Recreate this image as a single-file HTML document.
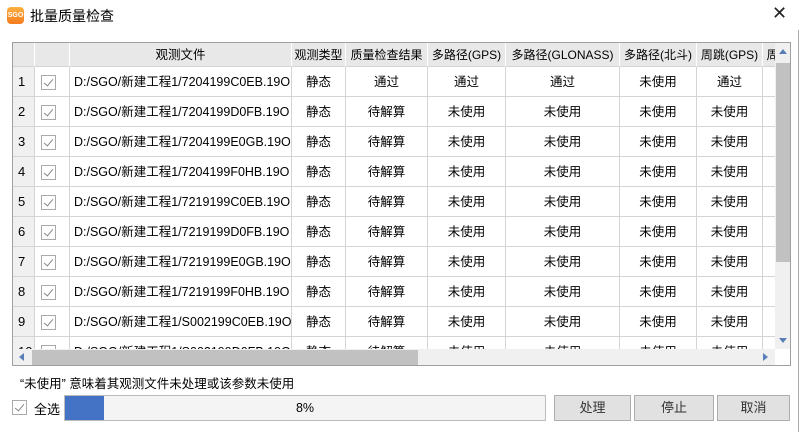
<!DOCTYPE html><html><head><meta charset="utf-8"><style>
*{margin:0;padding:0;box-sizing:border-box}
body{width:802px;height:432px;background:#fff;font-family:"Liberation Sans","Noto Sans CJK SC",sans-serif;font-size:12.5px;color:#000;position:relative;overflow:hidden}
.a{position:absolute}
.c{position:absolute;text-align:center;line-height:30px;border-right:1px solid #d4d4d4;border-bottom:1px solid #d4d4d4;height:30px;white-space:nowrap;overflow:hidden}
.h{background:#e8e8e8;line-height:24px;height:24px;border-right:1px solid #fff;border-bottom:1px solid #d4d4d4}
.n{background:#f0f0f0;text-align:left;padding-left:5px;font-size:13px}
.cb{position:absolute;left:41px;width:15px;height:15px;border:1px solid #aaa;background:#fff}
.cb:after{content:"";position:absolute;left:4px;top:1px;width:4px;height:8px;border-right:1px solid #888;border-bottom:1px solid #888;transform:rotate(40deg)}
.btn{position:absolute;top:395px;height:26px;background:#e1e1e1;border:1px solid #adadad;text-align:center;line-height:24px;color:#333;font-size:13px}
</style></head><body>
<div class="a" style="left:7px;top:7px;width:17px;height:17px;border-radius:4px;background:linear-gradient(#fcb040,#f57c1f);color:#fff;font-size:7px;font-weight:bold;line-height:17px;text-align:center">SGO</div>
<div class="a" style="left:30px;top:6px;font-size:14px">批量质量检查</div>
<div class="a" style="left:772px;top:3px;font-size:18px;color:#222">✕</div>
<div class="a" style="left:798px;top:30px;width:1px;height:402px;background:#aaa"></div>
<div class="a" style="left:12px;top:42px;width:779px;height:324px;border:1px solid #a0a0a0;overflow:hidden" id="t"></div>
<script>
var t=document.getElementById('t');
var cols=[[0,22],[22,35],[57,222],[279,54],[333,82],[415,78],[493,114],[607,77],[684,66],[750,20]];
var hd=['','','观测文件','观测类型','质量检查结果','多路径(GPS)','多路径(GLONASS)','多路径(北斗)','周跳(GPS)','周'];
var h='';
cols.forEach(function(c,i){h+='<div class="c h" style="left:'+c[0]+'px;top:0;width:'+c[1]+'px;'+(i>=3?'font-size:12px;':'')+'">'+hd[i]+'</div>'});
var f=['7204199C0EB','7204199D0FB','7204199E0GB','7204199F0HB','7219199C0EB','7219199D0FB','7219199E0GB','7219199F0HB','S002199C0EB','S002199D0FB'];
for(var r=0;r<10;r++){var y=24+r*30;
var first=r==0;
var v=[''+(r+1),'','D:/SGO/新建工程1/'+f[r]+'.19O','静态',first?'通过':'待解算',first?'通过':'未使用',first?'通过':'未使用','未使用',first?'通过':'未使用',''];
cols.forEach(function(c,i){var cl='c'+(i==0?' n':'');var st='left:'+c[0]+'px;top:'+y+'px;width:'+c[1]+'px;'+(i==2?'text-align:left;padding-left:4px;':'');h+='<div class="'+cl+'" style="'+st+'">'+v[i]+'</div>'});
h+='<div class="cb" style="left:28px;top:'+(y+8)+'px"></div>';}
h+='<div class="a" style="left:762px;top:0;width:16px;height:306px;background:#f0f0f0"></div>';
h+='<div class="a" style="left:763px;top:20px;width:14px;height:199px;background:#c1c1c1"></div>';
h+='<div class="a" style="left:766px;top:6px;width:0;height:0;border-left:4px solid transparent;border-right:4px solid transparent;border-bottom:5px solid #5a7fb8"></div>';
h+='<div class="a" style="left:766px;top:295px;width:0;height:0;border-left:4px solid transparent;border-right:4px solid transparent;border-top:5px solid #5a7fb8"></div>';
h+='<div class="a" style="left:0;top:306px;width:762px;height:17px;background:#f0f0f0"></div>';
h+='<div class="a" style="left:19px;top:307px;width:386px;height:15px;background:#c1c1c1"></div>';
h+='<div class="a" style="left:6px;top:310px;width:0;height:0;border-top:4px solid transparent;border-bottom:4px solid transparent;border-right:5px solid #5a7fb8"></div>';
h+='<div class="a" style="left:750px;top:310px;width:0;height:0;border-top:4px solid transparent;border-bottom:4px solid transparent;border-left:5px solid #5a7fb8"></div>';
h+='<div class="a" style="left:762px;top:306px;width:16px;height:17px;background:#fff"></div>';
t.innerHTML=h;
</script>
<div class="a" style="left:20px;top:373px">“未使用” 意味着其观测文件未处理或该参数未使用</div>
<div class="cb" style="left:12px;top:400px"></div>
<div class="a" style="left:34px;top:399px;font-size:13px">全选</div>
<div class="a" style="left:64px;top:395px;width:482px;height:26px;border:1px solid #bcbcbc;background:#f4f4f4;text-align:center;line-height:24px">8%</div>
<div class="a" style="left:65px;top:396px;width:39px;height:24px;background:#4472c4"></div>
<div class="btn" style="left:554px;width:77px">处理</div>
<div class="btn" style="left:634px;width:80px">停止</div>
<div class="btn" style="left:717px;width:73px">取消</div>
</body></html>
